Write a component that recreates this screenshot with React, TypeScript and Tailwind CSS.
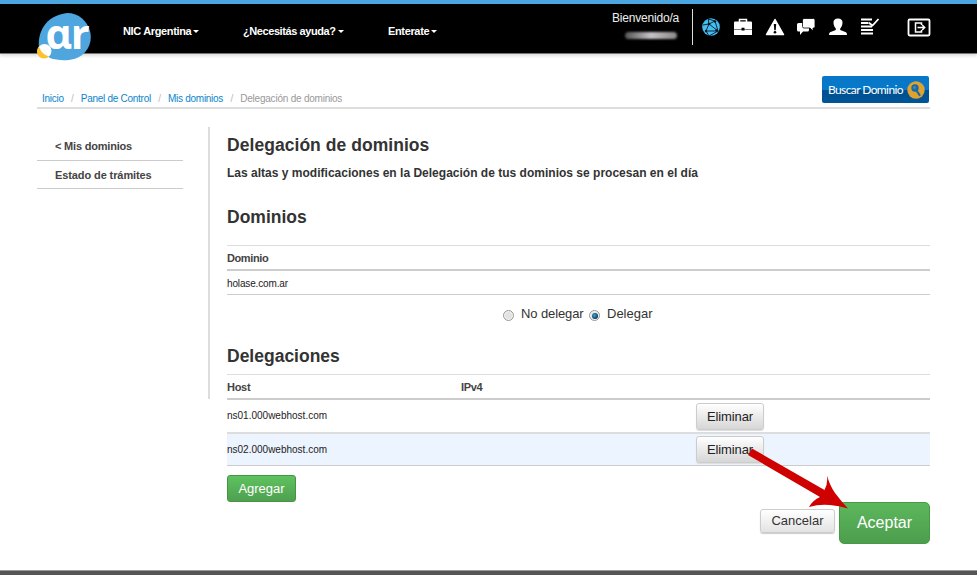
import React from "react";

function Logo() {
  return (
    <svg width="56" height="50" viewBox="0 0 56 50" className="block overflow-visible">
      <path
        d="M30 1C42 1 50 9 53 19C56 31 50 43 37 47C28 49.500 19 48 13 46L2 38C0 20 8 4 30 1Z"
        fill="#4fa5de"
      />
      <text
        x="8.500"
        y="36.500"
        fill="#fff"
        className="font-['Noto_Sans',sans-serif] text-[41px] font-bold tracking-[-0.5px]"
      >
        ɑr
      </text>
      <circle cx="7.500" cy="39" r="7" fill="#fff" />
      <path d="M2 34.500A7 7 0 1 0 12 44.500C7 43 3.500 39.500 2 34.500Z" fill="#fdc02f" />
    </svg>
  );
}

function Caret() {
  return <span className="ml-[2px] h-0 w-0 border-x-[3px] border-t-[3px] border-x-transparent border-t-white" />;
}

function NavItem({ label, className }: { label: string; className: string }) {
  return (
    <a className={`flex shrink-0 items-center whitespace-nowrap text-[11px] leading-[14px] font-bold text-white ${className}`}>
      {label}
      <Caret />
    </a>
  );
}

function Icons() {
  return (
    <div className="ml-[8px] mt-[13px] flex h-5 items-center">
      <svg width="20" height="20" viewBox="0 0 20 20">
        <circle cx="10" cy="10" r="8.800" fill="#45bdf0" />
        <g stroke="#061a26" strokeWidth=".9" fill="none">
          <path d="M7 1L8 7L14 4L17 14L5 14L8 7L2 8M14 4L7 2M8 7L17 14M5 14L8 19L17 14" />
        </g>
        <circle cx="8" cy="7" r="1.300" fill="#061a26" />
        <circle cx="14" cy="4.500" r="1.200" fill="#061a26" />
        <circle cx="15.500" cy="13.500" r="1.300" fill="#061a26" />
        <circle cx="5" cy="14" r="1.200" fill="#061a26" />
      </svg>
      <svg width="20" height="20" viewBox="0 0 20 20" className="ml-3">
        <path d="M6.500 5V2.500h7V5" stroke="#fff" strokeWidth="1.500" fill="none" />
        <path d="M2 4.500h16q1 0 1 1V12h-7.500v-1.200h-3V12H1V5.500q0-1 1-1ZM1 12.600h7.500v1h3v-1H19v5.400H1Z" fill="#fff" />
      </svg>
      <svg width="20" height="20" viewBox="0 0 20 20" className="ml-3">
        <path d="M10 2.500L18.500 17.500H1.500Z" fill="#fff" stroke="#fff" strokeWidth="1.500" strokeLinejoin="round" />
        <path d="M8.800 7h2.400l-.5 6.200H9.300Z" fill="#000" />
        <circle cx="10" cy="15.300" r="1.300" fill="#000" />
      </svg>
      <svg width="20" height="20" viewBox="0 0 20 20" className="ml-[11px]">
        <path d="M2.500 6H13v7q0 1.500-1.500 1.500H7L4 18v-3.500H2.500Q1 14.500 1 13V7.500Q1 6 2.500 6Z" fill="#fff" />
        <path d="M8 1.500h9.500q1.500 0 1.500 1.500v6.500q0 1.500-1.500 1.500H17v3l-3-3H8Q6.500 11 6.500 9.500V3Q6.500 1.500 8 1.500Z" fill="#fff" stroke="#000" strokeWidth=".8" />
      </svg>
      <svg width="20" height="20" viewBox="0 0 20 20" className="ml-3">
        <path d="M10 1.500C13 1.500 14.800 3 14.500 6C14.300 9 13 10.500 12.200 11.500V13L18 15.200Q19 15.700 19 18H1Q1 15.700 2 15.200L7.800 13V11.500C7 10.500 5.700 9 5.500 6C5.200 3 7 1.500 10 1.500Z" fill="#fff" />
      </svg>
      <svg width="20" height="20" viewBox="0 0 20 20" className="ml-3">
        <path d="M1 2.500h11M1 6h7M1 9.500h11M1 13h12M1 16.500h12" stroke="#fff" strokeWidth="1.800" />
        <path d="M8.500 5.500L12.500 8.500L18.500 2" stroke="#fff" strokeWidth="1.800" fill="none" />
      </svg>
      <svg width="24" height="20" viewBox="0 0 24 20" className="ml-[27px]">
        <rect x="1.500" y="2.500" width="21" height="16" rx="1.200" stroke="#fff" strokeWidth="1.800" fill="none" />
        <path d="M14.500 8V6H8.500v9h6v-2M10.500 10.500h7M15.200 8l2.500 2.500L15.200 13" stroke="#fff" strokeWidth="1.500" fill="none" />
      </svg>
    </div>
  );
}

function Header() {
  return (
    <header className="flex h-[54px] shrink-0 items-start border-t-4 border-b border-t-[#4ba5df] border-b-[#777] bg-black shadow-[0_2px_3px_#ddd]">
      <div className="ml-[37px] mt-[8px] w-[86px] shrink-0"><Logo /></div>
      <nav className="mt-5 flex w-[489px] shrink-0">
        <NavItem label="NIC Argentina" className="w-[120px] tracking-[-0.35px]" />
        <NavItem label="¿Necesitás ayuda?" className="w-[145px] tracking-[-0.42px]" />
        <NavItem label="Enterate" className="w-[80px] tracking-[-0.35px]" />
      </nav>
      <div className="mt-[7px] w-[67px] shrink-0 text-xs leading-[14px] tracking-[-0.2px] whitespace-nowrap text-[#eee]">
        Bienvenido/a
        <div className="mt-[7px] ml-[13px] h-[7px] w-[52px] rounded-full bg-gradient-to-r from-[#555] via-[#c9c3c8] to-[#888] blur-[1px]" />
      </div>
      <div className="ml-[13px] mt-[5px] h-9 w-px shrink-0 bg-[#ddd]" />
      <Icons />
    </header>
  );
}

function Slash() {
  return <span className="w-[17.2px] text-center text-[#bbb]">/</span>;
}

function TopBar() {
  return (
    <div className="ml-[37px] flex h-[55px] w-[893px] shrink-0 items-end border-b-2 border-[#ddd]">
      <div className="mb-[2px] ml-[5px] flex text-[10px] leading-3 tracking-[-0.28px] whitespace-nowrap text-[#0a85cc]">
        <a>Inicio</a>
        <Slash />
        <a>Panel de Control</a>
        <Slash />
        <a>Mis dominios</a>
        <Slash />
        <span className="tracking-[-0.22px] text-[#999]">Delegación de dominios</span>
      </div>
      <button className="mr-px mb-[4px] ml-auto flex h-[27px] w-[107px] items-center rounded-[2px] bg-[linear-gradient(#0876c6_0%,#0779ca_50%,#004f91_52%,#005698_100%)] pl-[6px] font-['Lato',sans-serif] text-[12px] whitespace-nowrap text-white">
        <span className="w-[79px] text-left tracking-[-0.6px]">Buscar Dominio</span>
        <svg width="18" height="18" viewBox="0 0 18 18">
          <circle cx="9" cy="9" r="8.700" fill="#dfa22f" />
          <circle cx="8" cy="7" r="3" fill="#1769a8" stroke="#1769a8" strokeWidth="1.400" />
          <circle cx="7.500" cy="6.500" r="1.500" fill="#4f87a8" />
          <path d="M9.500 9.500L12.500 14" stroke="#1769a8" strokeWidth="2.200" strokeLinecap="round" />
        </svg>
      </button>
    </div>
  );
}

function Radio({ checked }: { checked?: boolean }) {
  return (
    <span className="mt-[4px] flex h-[11px] w-[11px] items-center justify-center rounded-full border border-[#999] bg-[#e3e3e3] shadow-[inset_0_0_0_1px_#f5f5f5]">
      {checked && <span className="h-[6px] w-[6px] rounded-full bg-[radial-gradient(circle_at_40%_40%,#3ea6d8,#0b2f52_75%)]" />}
    </span>
  );
}

function HostRow({ host, className }: { host: string; className: string }) {
  return (
    <div className={`flex items-center ${className}`}>
      <span className="w-[469px] text-[10px] leading-3 text-[#222]">{host}</span>
      <button className="h-[27px] w-[68px] rounded-[3px] border border-[#ccc] bg-gradient-to-b from-white to-[#d6d6d6] text-[13px] leading-[15px] tracking-[-0.1px] text-[#222] shadow-[0_1px_1px_#ddd]">
        Eliminar
      </button>
    </div>
  );
}

function Arrow() {
  return (
    <svg width="102" height="64" viewBox="0 0 102 64" className="pointer-events-none absolute top-[448px] left-[747px]">
      <path
        d="M5 .5L77.500 42Q81 36 80 27.500Q83 38 88 45Q94 53 101 60.500Q92 57.500 83 57Q72 56 62 59Q66 52 73 49L1 7Z"
        fill="#cf0000"
      />
    </svg>
  );
}

export default function App() {
  return (
    <div className="relative flex h-[575px] w-[977px] flex-col overflow-hidden bg-white font-['Liberation_Sans',Arial,sans-serif] text-[#333]">
      <Header />
      <TopBar />
      <div className="ml-[37px] flex h-[461px] shrink-0">
        <aside className="mt-[18px] h-[272px] w-[173px] shrink-0 border-r-2 border-[#ddd] pt-[5px] text-[11px] leading-[14px] font-bold text-[#444]">
          <a className="block h-[29px] w-[146px] border-b border-[#ccc] pt-[7px] pl-[18px] tracking-[-0.2px]">&lt; Mis dominios</a>
          <a className="block h-[28px] w-[146px] border-b border-[#ccc] pt-[7px] pl-[18px] tracking-[-0.1px]">Estado de trámites</a>
        </aside>
        <main className="ml-[17px] w-[703px] shrink-0">
          <h1 className="mt-[26px] h-5 text-[17.5px] leading-5 font-bold tracking-[0.05px]">Delegación de dominios</h1>
          <p className="mt-[11px] h-[14px] text-xs leading-[14px] font-bold tracking-[0.01px] whitespace-nowrap">
            Las altas y modificaciones en la Delegación de tus dominios se procesan en el día
          </p>
          <h2 className="mt-[27px] h-5 text-[17.5px] leading-5 font-bold">Dominios</h2>
          <div className="mt-[18px] border-t border-[#ddd]">
            <div className="h-[25px] border-b-2 border-[#ccc] pt-[5px] text-[11px] leading-[14px] font-bold tracking-[-0.4px] text-[#444]">Dominio</div>
            <div className="h-[24px] border-b border-[#ccc] pt-[7px] text-[10px] leading-3 tracking-[-0.15px] text-[#222]">holase.com.ar</div>
          </div>
          <div className="mt-[11px] flex h-4 text-[13px] leading-4">
            <div className="ml-[276px] flex"><Radio /><span className="ml-[7px] w-[68px] tracking-[-0.1px]">No delegar</span></div>
            <div className="flex"><Radio checked /><span className="ml-[7px]">Delegar</span></div>
          </div>
          <h2 className="mt-[24px] h-5 text-[17.5px] leading-5 font-bold">Delegaciones</h2>
          <div className="mt-[8px] border-t border-[#ddd]">
            <div className="flex h-[25px] border-b-2 border-[#ccc] pt-[5px] text-[11px] leading-[14px] font-bold tracking-[-0.3px] text-[#444]">
              <span className="w-[234px]">Host</span>
              <span>IPv4</span>
            </div>
            <HostRow host="ns01.000webhost.com" className="h-[34px] border-b-2 border-[#ddd]" />
            <HostRow host="ns02.000webhost.com" className="h-[32px] border-b border-[#ccc] bg-[#ecf4ff]" />
          </div>
          <button className="mt-[9px] block h-[27px] w-[69px] rounded-[3px] border border-[#459345] bg-gradient-to-b from-[#5fc25f] to-[#4fa04f] text-[13px] leading-4 text-white">
            Agregar
          </button>
          <div className="flex items-start justify-end">
            <button className="mt-[7px] mr-[4px] h-[24px] w-[75px] rounded-[3px] border border-[#ccc] bg-gradient-to-b from-white to-[#e3e3e3] text-[13px] leading-4 text-[#333] shadow-[0_1px_1px_#ccc]">
              Cancelar
            </button>
            <button className="h-[42px] w-[91px] rounded-[5px] border border-[#459b45] bg-gradient-to-b from-[#5cb85c] to-[#4d9d4d] text-base text-white">
              Aceptar
            </button>
          </div>
        </main>
      </div>
      <footer className="mt-auto h-[5px] shrink-0 border-t border-[#999] bg-[#555]" />
      <Arrow />
    </div>
  );
}
